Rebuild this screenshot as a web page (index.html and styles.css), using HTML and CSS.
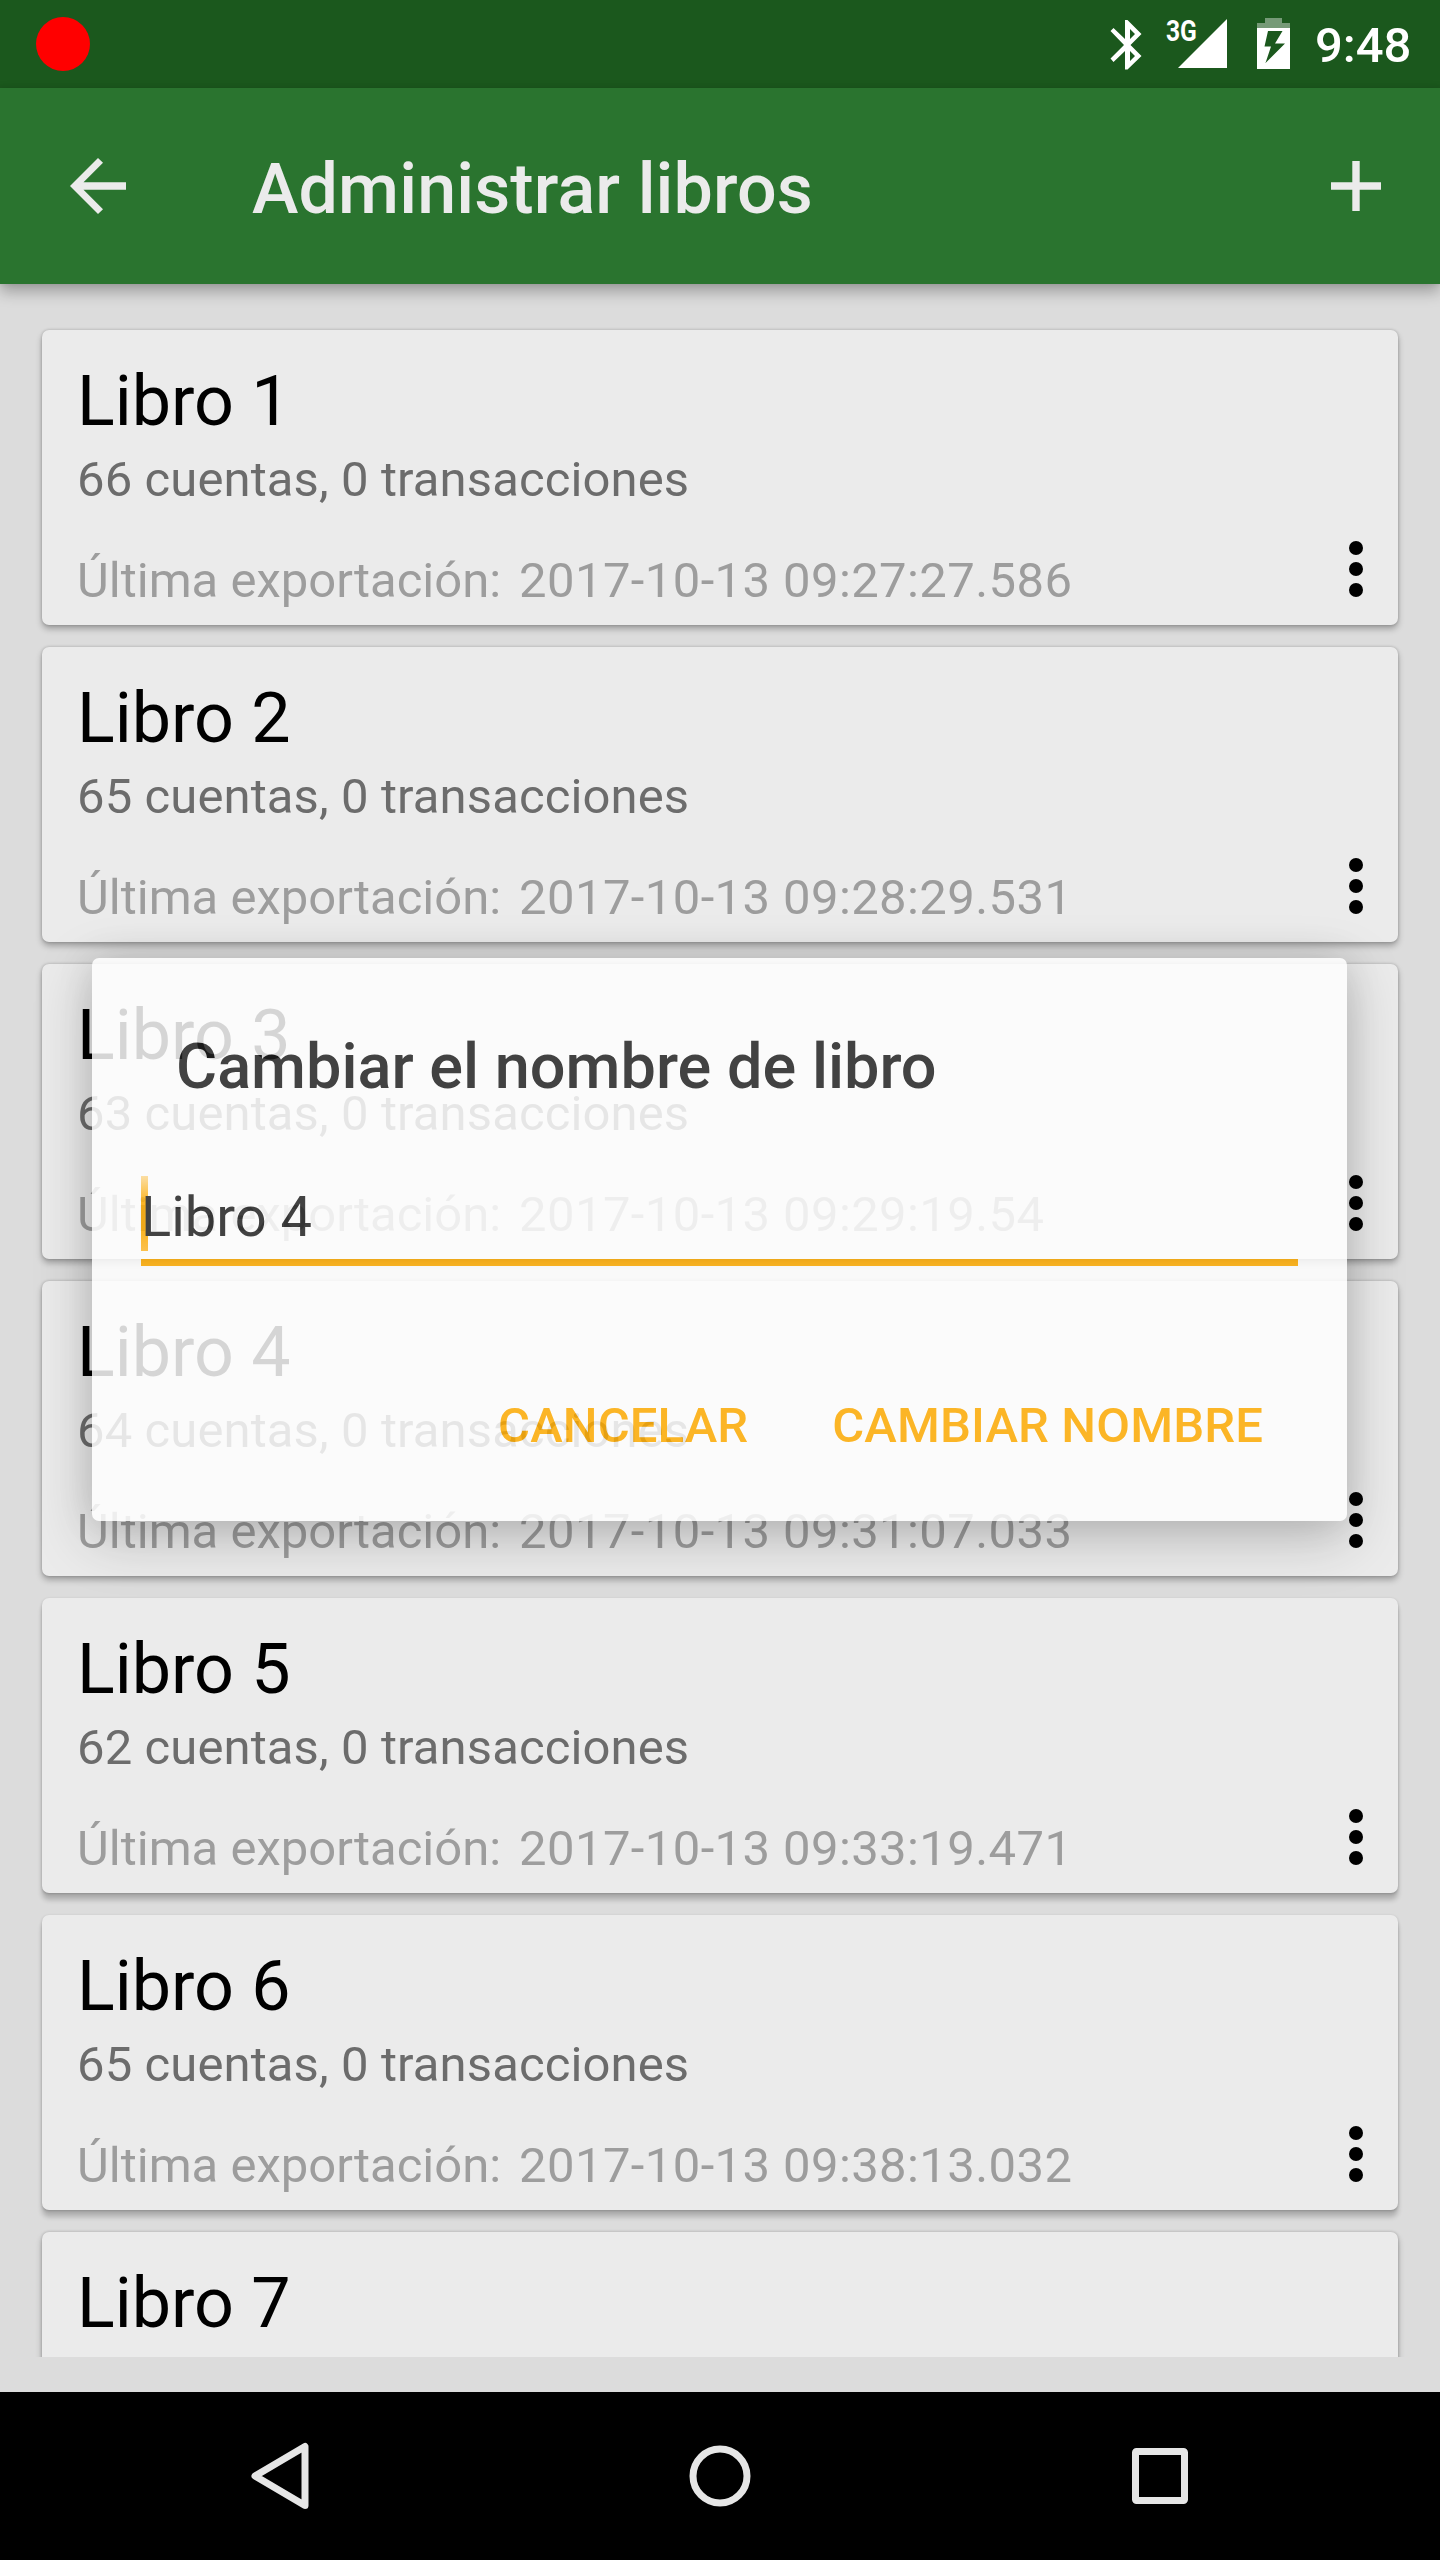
FILE: index.html
```html
<!DOCTYPE html>
<html lang="es">
<head>
<meta charset="utf-8">
<title>Administrar libros</title>
<link rel="stylesheet" href="styles.css">
</head>
<body>
<div class="screen">
  <div class="status-bar">
    <span class="record-dot"></span>
    <div class="status-icons">
      <svg class="icon-bluetooth" width="32" height="50" viewBox="0 0 32 50"><path fill="#fff" fill-rule="evenodd" d="M15 0H17.500L31.500 14L20.500 25L31.500 36L17.500 49.500H15V31L3.500 42L0.500 38.500L14 25L0.500 11L3.500 8L15 19ZM20 9V19L25 14ZM20 31V41L25 36Z"/></svg>
      <div class="network">
        <span class="network-type">3G</span>
        <svg width="49" height="49" viewBox="0 0 49 49"><path fill="#fff" d="M49 0V49H0Z"/></svg>
      </div>
      <svg class="icon-battery" width="33" height="51" viewBox="0 0 33 51"><path fill="#fff" opacity=".4" d="M8 0H25V5H33V10H0V5H8Z"/><path fill="#fff" fill-rule="evenodd" d="M0 10H33V51H0ZM11 13L7.500 28.500H14L8.500 45L28 25.500H18L25.500 13Z"/></svg>
      <span class="clock">9:48</span>
    </div>
  </div>

  <header class="app-bar">
    <svg class="icon-back" width="56" height="56" viewBox="0 0 56 56"><path fill="#ebebeb" d="M56 24.300V31.700H13.500L33 51.200L28 56L0 28L28 0L33 4.800L13.500 24.300Z"/></svg>
    <h1 class="app-title">Administrar libros</h1>
    <svg class="icon-add" width="50" height="50" viewBox="0 0 50 50"><path fill="#ebebeb" d="M21.300 0H28.700V21.300H50V28.700H28.700V50H21.300V28.700H0V21.300H21.300Z"/></svg>
  </header>

  <main class="books">
    <article class="card">
      <h2 class="book-name">Libro 1</h2>
      <p class="book-stats">66 cuentas, 0 transacciones</p>
      <p class="book-export"><span>Última exportación:</span><span class="book-date">2017-10-13 09:27:27.586</span></p>
      <div class="menu"><i></i><i></i><i></i></div>
    </article>
    <article class="card">
      <h2 class="book-name">Libro 2</h2>
      <p class="book-stats">65 cuentas, 0 transacciones</p>
      <p class="book-export"><span>Última exportación:</span><span class="book-date">2017-10-13 09:28:29.531</span></p>
      <div class="menu"><i></i><i></i><i></i></div>
    </article>
    <article class="card">
      <h2 class="book-name">Libro 3</h2>
      <p class="book-stats">63 cuentas, 0 transacciones</p>
      <p class="book-export"><span>Última exportación:</span><span class="book-date">2017-10-13 09:29:19.54</span></p>
      <div class="menu"><i></i><i></i><i></i></div>
    </article>
    <article class="card">
      <h2 class="book-name">Libro 4</h2>
      <p class="book-stats">64 cuentas, 0 transacciones</p>
      <p class="book-export"><span>Última exportación:</span><span class="book-date">2017-10-13 09:31:07.033</span></p>
      <div class="menu"><i></i><i></i><i></i></div>
    </article>
    <article class="card card-raised">
      <h2 class="book-name">Libro 5</h2>
      <p class="book-stats">62 cuentas, 0 transacciones</p>
      <p class="book-export"><span>Última exportación:</span><span class="book-date">2017-10-13 09:33:19.471</span></p>
      <div class="menu"><i></i><i></i><i></i></div>
    </article>
    <article class="card card-raised">
      <h2 class="book-name">Libro 6</h2>
      <p class="book-stats">65 cuentas, 0 transacciones</p>
      <p class="book-export"><span>Última exportación:</span><span class="book-date">2017-10-13 09:38:13.032</span></p>
      <div class="menu"><i></i><i></i><i></i></div>
    </article>
    <article class="card">
      <h2 class="book-name">Libro 7</h2>
    </article>
  </main>

  <nav class="nav-bar">
    <svg width="200" height="72" viewBox="0 0 200 72"><path d="M75 36L125 6.500V65.500Z" fill="none" stroke="#e6e6e6" stroke-width="7" stroke-linejoin="round"/></svg>
    <svg width="200" height="72" viewBox="0 0 200 72"><circle cx="100" cy="36" r="27" fill="none" stroke="#e6e6e6" stroke-width="7"/></svg>
    <svg width="200" height="72" viewBox="0 0 200 72"><rect x="75.500" y="11.500" width="49" height="49" rx="1" fill="none" stroke="#e6e6e6" stroke-width="7" stroke-linejoin="round"/></svg>
  </nav>

  <section class="dialog">
    <h2 class="dialog-title">Cambiar el nombre de libro</h2>
    <div class="field"><span class="caret"></span><span class="field-text">Libro 4</span></div>
    <div class="actions">
      <span class="action">CANCELAR</span>
      <span class="action">CAMBIAR NOMBRE</span>
    </div>
  </section>
</div>
</body>
</html>
```
FILE: styles.css
```css
* {
  box-sizing: border-box;
}

body {
  margin: 0;
  font-family: Roboto, "Noto Sans", sans-serif;
}

h1,
h2,
p {
  margin: 0;
  font-weight: 400;
}

.screen {
  position: relative;
  display: flex;
  flex-direction: column;
  width: 1440px;
  height: 2560px;
  overflow: hidden;
  background: #dcdcdc;
}

.status-bar {
  display: flex;
  justify-content: space-between;
  flex: none;
  height: 88px;
  padding: 0 30px 0 36px;
  background: #1b581d;
}

.record-dot {
  width: 54px;
  height: 54px;
  margin-top: 17px;
  border-radius: 50%;
  background: #f00;
}

.status-icons {
  display: flex;
  align-items: flex-start;
}

.icon-bluetooth {
  margin-top: 20px;
}

.network {
  position: relative;
  margin: 19px 30px 0 36px;
  height: 49px;
}

.network-type {
  position: absolute;
  left: -12px;
  top: -5px;
  font-size: 30px;
  font-weight: 700;
  line-height: 34px;
  color: #fff;
  transform: scaleX(0.82);
  transform-origin: 0 0;
}

.icon-battery {
  margin-top: 18px;
}

.clock {
  width: 95px;
  margin-left: 25px;
  padding-top: 17px;
  font-size: 49px;
  font-weight: 500;
  line-height: 58px;
  color: #fff;
}

.app-bar {
  position: relative;
  z-index: 1;
  display: flex;
  align-items: center;
  flex: none;
  height: 196px;
  padding: 0 59px 0 70px;
  background: #2a742f;
  box-shadow: 0 8px 14px rgba(0, 0, 0, 0.28), 0 0 5px rgba(0, 0, 0, 0.1);
}

.app-title {
  flex: 1;
  margin-left: 126px;
  padding-top: 6px;
  font-size: 70px;
  font-weight: 500;
  letter-spacing: 0.12px;
  line-height: 82px;
  color: #ebebeb;
}

.books {
  display: flex;
  flex-direction: column;
  gap: 22px;
  height: 2073px;
  padding: 46px 42px 0;
  overflow: hidden;
}

.card {
  position: relative;
  flex: none;
  height: 295px;
  padding: 30px 35px 0;
  border-radius: 7px;
  background: #ebebeb;
  box-shadow: 0 4px 6px rgba(0, 0, 0, 0.28), 0 0 3px rgba(0, 0, 0, 0.22);
}

.card-raised {
  box-shadow: 0 7px 5px rgba(0, 0, 0, 0.2), 0 1px 3px rgba(0, 0, 0, 0.22);
}

.book-name {
  font-size: 70px;
  line-height: 82px;
  color: #000;
}

.book-stats {
  margin-top: 9px;
  font-size: 49px;
  letter-spacing: 0.11px;
  line-height: 58px;
  color: #6c6c6c;
}

.book-export {
  display: flex;
  gap: 18px;
  margin-top: 43px;
  font-size: 49px;
  line-height: 58px;
  color: #9d9d9d;
}

.book-date {
  letter-spacing: 0.4px;
}

.menu {
  position: absolute;
  right: 35px;
  bottom: 28px;
  display: flex;
  flex-direction: column;
  gap: 7px;
}

.menu i {
  width: 14px;
  height: 14px;
  border-radius: 50%;
  background: #000;
}

.nav-bar {
  display: flex;
  justify-content: space-between;
  align-items: center;
  height: 168px;
  margin-top: auto;
  padding: 0 180px;
  background: #000;
}

.dialog {
  position: absolute;
  z-index: 2;
  left: 92px;
  top: 958px;
  width: 1255px;
  height: 563px;
  border-radius: 7px;
  background: #fff;
  color: #212121;
  opacity: 0.835;
  box-shadow: 0 16px 56px rgba(0, 0, 0, 0.25), 0 0 36px rgba(0, 0, 0, 0.12);
}

.dialog-title {
  padding: 72px 84px 0;
  font-size: 63px;
  font-weight: 500;
  line-height: 74px;
}

.field {
  position: relative;
  height: 94px;
  margin: 68px 49px 0;
  border-bottom: 7px solid #ffab00;
}

.field-text {
  position: relative;
  display: block;
  padding-top: 12px;
  font-size: 56px;
  line-height: 66px;
}

.caret {
  position: absolute;
  left: 0;
  top: 4px;
  width: 7px;
  height: 75px;
  background: linear-gradient(#ffdc96, #ffab00 35%, #ffab00 75%, #ffb930);
}

.actions {
  display: flex;
  justify-content: flex-end;
  gap: 84px;
  margin-top: 131px;
  padding-right: 84px;
  font-size: 49px;
  font-weight: 500;
  letter-spacing: 0.13px;
  line-height: 58px;
  color: #ffab00;
}
```
